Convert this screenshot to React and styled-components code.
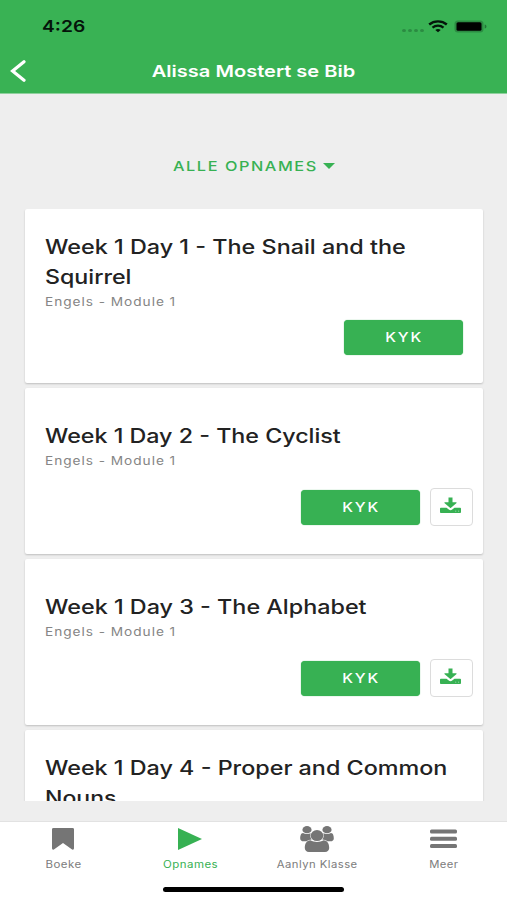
import React from "react";
import styled, { createGlobalStyle } from "styled-components";

const recordings = [
  {
    lines: [
      { text: "Week 1 Day 1 - The Snail and the", stretch: 1.198 },
      { text: "Squirrel", stretch: 1.19 },
    ],
    height: 174,
  },
  { lines: [{ text: "Week 1 Day 2 - The Cyclist", stretch: 1.192 }], height: 166, download: true },
  { lines: [{ text: "Week 1 Day 3 - The Alphabet", stretch: 1.197 }], height: 166, download: true },
  {
    lines: [
      { text: "Week 1 Day 4 - Proper and Common", stretch: 1.196 },
      { text: "Nouns", stretch: 1.18 },
    ],
    height: 174,
  },
];

const WifiIcon = () => (
  <svg width="20" height="13" viewBox="0 0 20 13" fill="none" stroke="#04140a">
    <path d="M1.2 4.5C6.1 0.3 13.9 0.3 18.8 4.5" strokeWidth="2.4" />
    <path d="M4.5 7.6C7.6 5 12.4 5 15.5 7.6" strokeWidth="2.3" />
    <path d="M7.3 9.9C8.8 8.6 11.2 8.6 12.7 9.9L10 12.2Z" fill="#04140a" stroke="none" />
  </svg>
);

const BatteryIcon = () => (
  <svg width="33" height="13" viewBox="0 0 33 13">
    <rect x="0.5" y="0.5" width="29" height="12" rx="3.5" fill="#2c8c43" />
    <rect x="2.5" y="2.2" width="25" height="8.6" rx="1.6" fill="#000" />
    <path d="M30.7 4.5C33 5 33 8 30.7 8.5Z" fill="#237438" />
  </svg>
);

const BackIcon = () => (
  <svg width="16" height="22" viewBox="0 0 16 22" fill="none" stroke="#fff" strokeWidth="3.2">
    <path d="M14 1.8L2.6 11L14 20.2" strokeLinecap="round" />
  </svg>
);

const DownloadIcon = () => (
  <svg width="21" height="17" viewBox="0 0 21 17" fill="#37b153">
    <path d="M8.5 0.5h4v4.7h3.4c.7 0 .9.6.4 1L11 10.7c-.3.3-.7.3-1 0L4.7 6.2c-.5-.4-.3-1 .4-1h3.4z" />
    <path d="M1.2 10.8h5.3l2.3 1.8c1 .8 2.4.8 3.4 0l2.3-1.8h5.3c.7 0 1.2.4 1.2 1v3.2c0 .6-.5 1-1.2 1H1.2c-.7 0-1.2-.4-1.2-1v-3.2c0-.6.5-1 1.2-1z" />
    <circle cx="15.7" cy="14.2" r="0.6" fill="#8fd3a0" />
    <circle cx="18.6" cy="14.2" r="0.6" fill="#8fd3a0" />
  </svg>
);

const BookmarkIcon = () => (
  <svg width="22" height="22" viewBox="0 0 22 22" fill="#757575">
    <path d="M1.5 0h19q1.5 0 1.5 1.3v19q0 1.9-1.9 1.3L11 15 1.9 21.6Q0 22.2 0 20.3v-19Q0 0 1.5 0z" />
  </svg>
);

const PlayIcon = () => (
  <svg width="24" height="22" viewBox="0 0 24 22" fill="#37b153">
    <path d="M0 0L24 11L0 22Z" />
  </svg>
);

const GroupIcon = () => (
  <svg width="34" height="26" viewBox="0 0 34 26" fill="#757575">
    <ellipse cx="7" cy="3.7" rx="4.6" ry="3.6" />
    <ellipse cx="27" cy="3.7" rx="4.6" ry="3.6" />
    <path d="M3 7c2.2 1.3 5.5 1.3 7.7.2-.8 2.5-.4 4.500 1 6.400-2.100.1-3.700.7-5 1.600H3.600C1.500 15.200.2 14.300.2 12.400.2 10 .9 7 3 7z" />
    <path d="M31 7c-2.200 1.300-5.500 1.300-7.700.2.8 2.500.4 4.500-1 6.400 2.100.1 3.700.7 5 1.600h3.100c2.100 0 3.400-.9 3.400-2.800C33.800 10 33.100 7 31 7z" />
    <ellipse cx="17" cy="9.6" rx="6.3" ry="5.5" />
    <path d="M10.400 14.300c4 2.100 9.200 2.100 13.200 0 4 .2 5.600 3.600 5.600 7.700 0 2.400-1.600 3.900-4.200 3.900H9c-2.600 0-4.200-1.500-4.200-3.900 0-4.100 1.600-7.500 5.600-7.700z" />
  </svg>
);

const MenuIcon = () => (
  <svg width="27" height="20" viewBox="0 0 27 20" fill="#757575">
    <rect y="0.5" width="27" height="4" rx="1.5" />
    <rect y="7.7" width="27" height="4" rx="1.5" />
    <rect y="15" width="27" height="4" rx="1.5" />
  </svg>
);

const tabs = [
  { label: "Boeke", icon: <BookmarkIcon />, stretch: 1.17 },
  { label: "Opnames", icon: <PlayIcon />, stretch: 1.17, active: true },
  { label: "Aanlyn Klasse", icon: <GroupIcon />, stretch: 1.15 },
  { label: "Meer", icon: <MenuIcon />, stretch: 1.15 },
];

const App = () => {
  return (
    <Screen>
      <GlobalStyle />
      <Header>
        <StatusBar>
          <Clock>4:26</Clock>
          <StatusIcons>
            <Dots>
              <i />
              <i />
              <i />
              <i />
            </Dots>
            <WifiIcon />
            <BatteryIcon />
          </StatusIcons>
        </StatusBar>
        <NavBar>
          <BackButton aria-label="Terug">
            <BackIcon />
          </BackButton>
          <PageTitle>Alissa Mostert se Bib</PageTitle>
        </NavBar>
      </Header>
      <Filter>
        <FilterLabel>ALLE OPNAMES</FilterLabel>
        <Caret />
      </Filter>
      <List>
        {recordings.map((item) => (
          <Card key={item.lines[0].text} $height={item.height} $download={item.download}>
            <Title>
              {item.lines.map((line) => (
                <TitleLine key={line.text} $stretch={line.stretch}>
                  {line.text}
                </TitleLine>
              ))}
            </Title>
            <Subtitle>Engels - Module 1</Subtitle>
            <Actions $download={item.download}>
              <WatchButton>
                <span>KYK</span>
              </WatchButton>
              {item.download && (
                <DownloadButton aria-label="Laai af">
                  <DownloadIcon />
                </DownloadButton>
              )}
            </Actions>
          </Card>
        ))}
      </List>
      <TabBar>
        {tabs.map((tab) => (
          <Tab key={tab.label} $active={tab.active}>
            <TabIcon>{tab.icon}</TabIcon>
            <TabLabel $stretch={tab.stretch}>{tab.label}</TabLabel>
          </Tab>
        ))}
      </TabBar>
      <HomeArea>
        <HomeIndicator />
      </HomeArea>
    </Screen>
  );
};

const GlobalStyle = createGlobalStyle`
  * {
    box-sizing: border-box;
  }

  body {
    margin: 0;
    font-family: Inter, "Liberation Sans", sans-serif;
  }

  button {
    border: none;
    padding: 0;
    font-family: inherit;
  }

  svg {
    display: block;
  }
`;

const Screen = styled.div`
  display: flex;
  flex-direction: column;
  width: 507px;
  height: 900px;
  background: #eeeeee;
  overflow: hidden;
`;

const Header = styled.header`
  height: 94px;
  flex-shrink: 0;
  background: #39b254;
  border-bottom: 1px solid #8fd09d;
`;

const StatusBar = styled.div`
  display: flex;
  justify-content: space-between;
  height: 49px;
  padding: 14px 20px 0 42px;
`;

const Clock = styled.span`
  font-size: 16.3px;
  font-weight: 600;
  line-height: 24px;
  color: #04140a;
  transform: scaleX(1.18);
  transform-origin: left;
`;

const StatusIcons = styled.div`
  display: flex;
  align-items: center;
  height: 24px;

  svg:first-of-type {
    margin: 0 6px 0 4px;
  }
`;

const Dots = styled.div`
  display: flex;
  gap: 2px;
  padding-top: 8px;

  i {
    width: 4px;
    height: 3px;
    border-radius: 50%;
    background: #2b8b42;
  }
`;

const NavBar = styled.div`
  display: grid;
  grid-template-columns: 60px 1fr 60px;
  align-items: center;
  height: 44px;
`;

const BackButton = styled.button`
  display: flex;
  padding-left: 10px;
  background: none;
`;

const PageTitle = styled.h1`
  margin: 0;
  text-align: center;
  font-size: 16.5px;
  font-weight: 600;
  line-height: 24px;
  color: #fff;
  white-space: nowrap;
  transform: scaleX(1.215);
`;

const Filter = styled.div`
  display: flex;
  align-items: center;
  justify-content: center;
  gap: 5px;
  height: 115px;
  padding-top: 29px;
  flex-shrink: 0;
  color: #37b153;
`;

const FilterLabel = styled.span`
  width: 145px;
  font-size: 13.5px;
  font-weight: 500;
  letter-spacing: 1.3px;
  white-space: nowrap;
  transform: scaleX(1.205);
  transform-origin: left;
`;

const Caret = styled.span`
  border: 6px solid transparent;
  border-top: 6px solid #37b153;
  border-bottom: none;
`;

const List = styled.main`
  display: flex;
  flex-direction: column;
  gap: 5px;
  height: 592px;
  flex-shrink: 0;
  padding: 0 24px 0 25px;
  overflow: hidden;
`;

const Card = styled.article`
  height: ${({ $height }) => $height}px;
  flex-shrink: 0;
  padding: ${({ $download }) => ($download ? 33 : 23)}px 20px 0;
  background: #fff;
  border-radius: 2px;
  box-shadow: 0 1px 2px rgba(0, 0, 0, 0.2);
`;

const Title = styled.h2`
  margin: 0;
  font-size: 19.5px;
  font-weight: 500;
  line-height: 30px;
  color: #222;
`;

const TitleLine = styled.span`
  display: block;
  width: max-content;
  transform: scaleX(${({ $stretch }) => $stretch});
  transform-origin: left;
`;

const Subtitle = styled.p`
  width: max-content;
  margin: 0;
  font-size: 11.5px;
  line-height: 20px;
  letter-spacing: 0.8px;
  color: #858585;
  transform: scaleX(1.19);
  transform-origin: left;
`;

const Actions = styled.div`
  display: flex;
  align-items: center;
  justify-content: flex-end;
  gap: 10px;
  height: 38px;
  margin-top: ${({ $download }) => ($download ? 17 : 6)}px;
  margin-right: ${({ $download }) => ($download ? -10 : 0)}px;
`;

const WatchButton = styled.button`
  width: 119px;
  height: 35px;
  border-radius: 4px;
  background: #37b153;
  color: #fff;
  font-size: 13px;
  font-weight: 500;
  letter-spacing: 1.5px;
  box-shadow: 0 0 1px #37b153;

  span {
    display: block;
    padding-left: 1px;
    transform: scaleX(1.2);
  }
`;

const DownloadButton = styled.button`
  display: flex;
  align-items: center;
  justify-content: center;
  width: 43px;
  height: 38px;
  padding: 0 2px 3px 0;
  border: 1px solid #dcdcdc;
  border-radius: 4px;
  background: #fff;
`;

const TabBar = styled.nav`
  display: grid;
  grid-template-columns: repeat(4, 1fr);
  height: 57px;
  margin-top: 20px;
  flex-shrink: 0;
  border-top: 1px solid #e2e2e2;
  background: #fff;
`;

const Tab = styled.div`
  display: flex;
  flex-direction: column;
  align-items: center;
  color: ${({ $active }) => ($active ? "#37b153" : "#7c7c7c")};
`;

const TabIcon = styled.div`
  display: flex;
  align-items: center;
  height: 34px;
`;

const TabLabel = styled.span`
  padding-left: 1px;
  font-size: 9.8px;
  line-height: 18px;
  letter-spacing: 0.4px;
  white-space: nowrap;
  transform: scaleX(${({ $stretch }) => $stretch});
`;

const HomeArea = styled.footer`
  flex: 1;
  padding-top: 9px;
  background: #fff;
`;

const HomeIndicator = styled.div`
  width: 181px;
  height: 5px;
  margin: 0 auto;
  border-radius: 3px;
  background: #000;
`;

export default App;
